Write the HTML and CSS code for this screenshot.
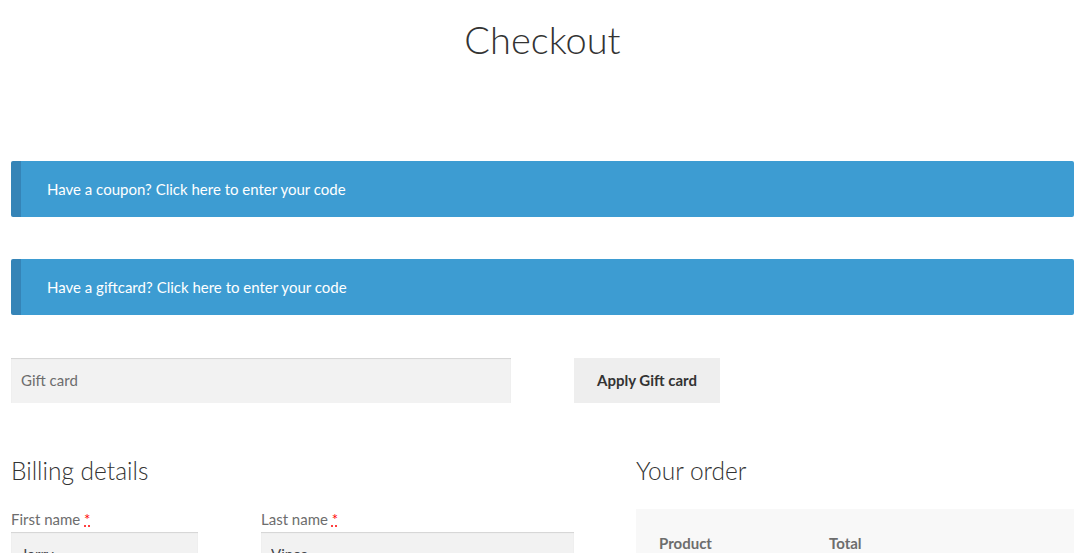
FILE: index.html
```html
<!DOCTYPE html>
<html lang="en">
<head>
<meta charset="utf-8">
<title>Checkout</title>
<link rel="stylesheet" href="styles.css">
</head>
<body>
<div class="page">
  <h1 class="title">Checkout</h1>

  <div class="notice notice-first">Have a coupon? <a href="#">Click here to enter your code</a></div>
  <div class="notice notice-second">Have a giftcard? <a href="#">Click here to enter your code</a></div>

  <form class="gift-form">
    <input class="gift-input" type="text" placeholder="Gift card">
    <button class="gift-btn" type="button">Apply Gift card</button>
  </form>

  <div class="columns">
    <section class="billing">
      <h3 class="section-title">Billing details</h3>
      <div class="field-row">
        <div class="field field-first">
          <label class="field-label">First name <abbr class="req" title="required">*</abbr></label>
          <input class="field-input" type="text" value="Jerry">
        </div>
        <div class="field field-last">
          <label class="field-label">Last name <abbr class="req" title="required">*</abbr></label>
          <input class="field-input" type="text" value="Vince">
        </div>
      </div>
    </section>
    <section class="order">
      <h3 class="section-title">Your order</h3>
      <div class="order-table">
        <div class="order-head">
          <span class="th th-product">Product</span>
          <span class="th th-total">Total</span>
        </div>
      </div>
    </section>
  </div>
</div>
</body>
</html>
```

FILE: styles.css
```css
* { box-sizing: border-box; }
html, body { margin: 0; padding: 0; background: #fff; }
body {
  font-family: Lato, "Open Sans", sans-serif;
  color: #6d6d6d;
  font-size: 15px;
  overflow: hidden;
}
.page {
  padding: 0 14px 0 11px;
  display: flex;
  flex-direction: column;
}
.title {
  margin: 17px 0 0;
  font-size: 38px;
  line-height: 1.2;
  font-weight: 300;
  color: #333;
  text-align: center;
}
.notice {
  height: 56px;
  display: flex;
  align-items: center;
  background: #3d9cd2;
  border-left: 10px solid #3584b7;
  border-radius: 2px;
  padding-left: 26px;
  color: #fff;
  font-size: 15px;
}
.notice a { color: #fff; text-decoration: none; margin-left: 4px; }
.notice-first { margin-top: 98px; }
.notice-second { margin-top: 42px; }
.gift-form {
  margin: 43px 0 0;
  display: flex;
  gap: 63px;
}
.gift-input {
  width: 500px;
  height: 45px;
  border: 0;
  background: #f2f2f2;
  box-shadow: inset 0 1px 1px rgba(0,0,0,.125);
  padding: 0 10px;
  font-family: inherit;
  font-size: 15px;
  color: #43454b;
  outline: none;
}
.gift-input::placeholder { color: #6d6d6d; }
.gift-btn {
  width: 146px;
  height: 45px;
  border: 0;
  background: #eeeeee;
  font-family: inherit;
  font-size: 15px;
  font-weight: 700;
  color: #333;
  padding: 0;
}
.columns {
  margin-top: 53px;
  display: flex;
  gap: 62px;
}
.billing { width: 563px; }
.order { flex: 1; }
.section-title {
  margin: 0 0 23px;
  font-size: 24.5px;
  line-height: 30px;
  font-weight: 300;
  color: #333;
}
.field-row { display: flex; gap: 63px; }
.field-first { width: 187px; }
.field-last { flex: 1; }
.field { display: flex; flex-direction: column; }
.field-label {
  font-size: 15px;
  line-height: 21px;
  color: #6d6d6d;
  margin-bottom: 2px;
}
.req {
  color: #ff0000;
  text-decoration: underline dotted #ff0000;
  border: 0;
}
.field-input {
  height: 45px;
  border: 0;
  background: #f2f2f2;
  box-shadow: inset 0 1px 1px rgba(0,0,0,.125);
  padding: 0 10px;
  font-family: inherit;
  font-size: 15px;
  color: #43454b;
  width: 100%;
}
.order-table {
  background: #f8f8f8;
  height: 80px;
  padding: 24px 23px 0;
}
.order-head { display: flex; }
.th {
  font-weight: 700;
  font-size: 15px;
  line-height: 21px;
  color: #6d6d6d;
}
.th-product { width: 170px; }
```
